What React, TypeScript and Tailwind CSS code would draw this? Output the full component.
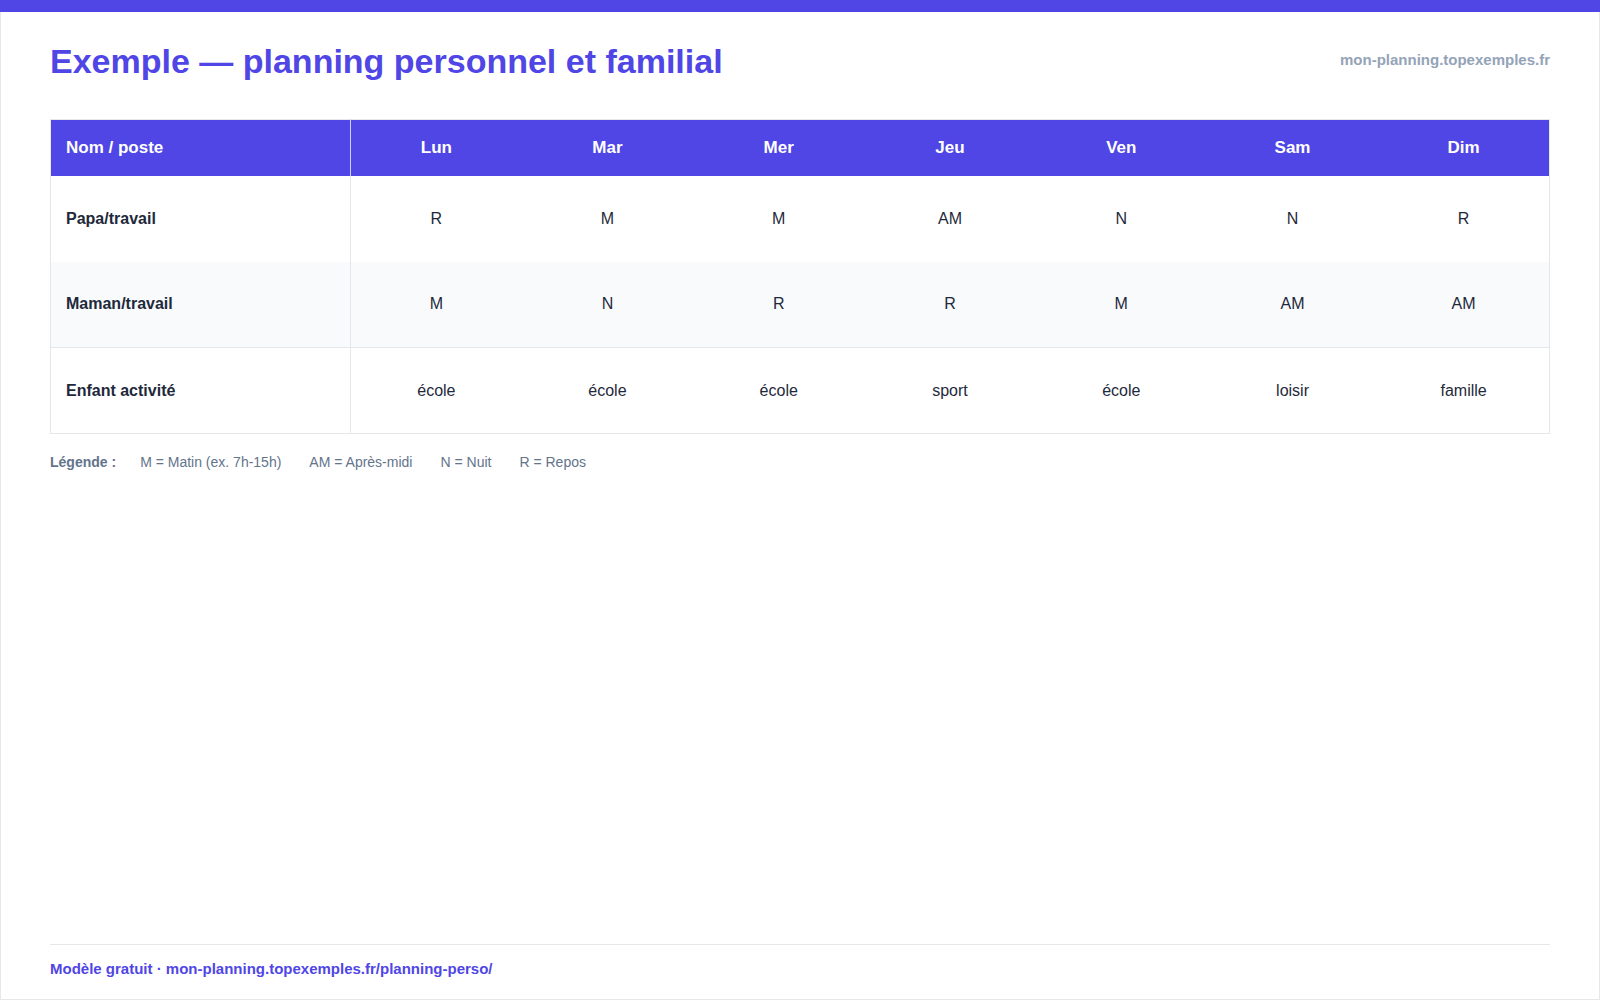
const days = ['Lun', 'Mar', 'Mer', 'Jeu', 'Ven', 'Sam', 'Dim'];

const rows = [
  { name: 'Papa/travail', cells: ['R', 'M', 'M', 'AM', 'N', 'N', 'R'] },
  { name: 'Maman/travail', cells: ['M', 'N', 'R', 'R', 'M', 'AM', 'AM'] },
  { name: 'Enfant activité', cells: ['école', 'école', 'école', 'sport', 'école', 'loisir', 'famille'] },
];

const legend = ['M = Matin (ex. 7h-15h)', 'AM = Après-midi', 'N = Nuit', 'R = Repos'];

export default function App() {
  return (
    <div className="w-[1600px] h-[1000px] flex flex-col bg-white font-['Liberation_Sans',Arial,sans-serif]">
      <div className="h-[12px] bg-[#4f46e5] shrink-0" />
      <div className="flex-1 flex flex-col border-x border-b border-[#e5e7eb] px-[49px]">
        {/* header */}
        <div className="flex items-center justify-between pt-[29px] mb-[37px]">
          <h1 className="text-[34px] leading-[41px] font-bold text-[#4f46e5]">
            Exemple — planning personnel et familial
          </h1>
          <span className="-mt-[3px] text-[15px] font-bold text-[#94a3b8]">mon-planning.topexemples.fr</span>
        </div>

        {/* planning */}
        <table className="w-[1500px] table-fixed border-collapse border border-[#e5e7eb]">
          <colgroup>
            <col className="w-[300px]" />
            {days.map((d) => (
              <col key={d} />
            ))}
          </colgroup>
          <thead>
            <tr className="h-[56px] bg-[#4f46e5] text-white text-[17px] font-bold">
              <th className="text-left pl-[15px] border-r border-[#c7d2fe]">Nom / poste</th>
              {days.map((d) => (
                <th key={d} className="text-center">{d}</th>
              ))}
            </tr>
          </thead>
          <tbody>
            {rows.map((r, i) => (
              <tr
                key={r.name}
                className={`h-[86px] text-[16px] ${i === 1 ? 'bg-[#f8fafc]' : 'bg-white'} ${i === 2 ? 'border-t border-[#e5e7eb]' : ''}`}
              >
                <td className="pl-[15px] font-bold text-[#1e293b] border-r border-[#e5e7eb]">{r.name}</td>
                {r.cells.map((c, j) => (
                  <td key={j} className="text-center text-[#1e293b]">{c}</td>
                ))}
              </tr>
            ))}
          </tbody>
        </table>

        {/* legende */}
        <div className="flex items-center mt-[18px] text-[14px] leading-[20px] text-[#64748b]">
          <span className="font-bold mr-[24px]">Légende :</span>
          <div className="flex gap-[28px]">
            {legend.map((l) => (
              <span key={l}>{l}</span>
            ))}
          </div>
        </div>

        {/* pied de page */}
        <div className="mt-auto border-t border-[#e5e7eb] pt-[12px] pb-[18px]">
          <span className="text-[15px] leading-[20px] font-bold text-[#4f46e5]">
            Modèle gratuit · mon-planning.topexemples.fr/planning-perso/
          </span>
        </div>
      </div>
    </div>
  );
}
